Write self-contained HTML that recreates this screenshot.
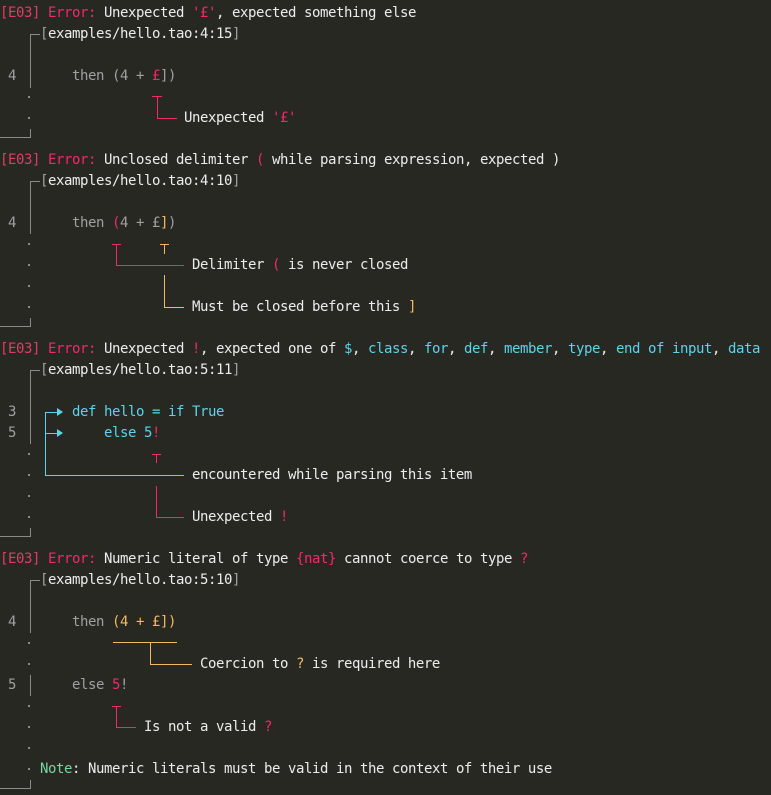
<!DOCTYPE html>
<html><head><meta charset="utf-8">
<style>
html,body{margin:0;padding:0;background:#282823;width:771px;height:795px;overflow:hidden}
body{position:relative;font-family:"DejaVu Sans Mono","Liberation Mono",monospace;font-size:14px;letter-spacing:-0.43px;color:#ececec}
.r{position:absolute;left:0;height:21px;line-height:21px;white-space:pre}
.g{color:#a0a0a0}.p{color:#f2286a}.y{color:#f4b860}.c{color:#5cd3ec}.n{color:#74d6a0}.e{color:#e03c68}
.l{position:absolute;background:#8a8a8a}
.lp{position:absolute;background:#f2286a}
.ly{position:absolute;background:#f4b860}
.lc{position:absolute;background:#5cd3ec}
.d{position:absolute;width:2px;height:2px;background:#8a8a8a;left:28px}
.tri{position:absolute;width:0;height:0;border-left:6px solid #5cd3ec;border-top:4px solid transparent;border-bottom:4px solid transparent;left:57px}
</style></head><body>

<div class="r" style="top:3px"><span class="e">[E03]</span> <span class="p">Error:</span> Unexpected <span class="p">'£'</span>, expected something else</div>
<div class="r" style="top:24px">     <span class="g">[</span>examples/hello.tao:4:15<span class="g">]</span></div>
<div class="r g" style="top:66px"> 4       then (4 + <span class="p">£</span>])</div>
<div class="r" style="top:108px">                       Unexpected <span class="p">'£'</span></div>

<div class="r" style="top:150px"><span class="e">[E03]</span> <span class="p">Error:</span> Unclosed delimiter <span class="p">(</span> while parsing expression, expected )</div>
<div class="r" style="top:171px">     <span class="g">[</span>examples/hello.tao:4:10<span class="g">]</span></div>
<div class="r g" style="top:213px"> 4       then <span class="p">(</span>4 + £<span class="y">]</span>)</div>
<div class="r" style="top:255px">                        Delimiter <span class="p">(</span> is never closed</div>
<div class="r" style="top:297px">                        Must be closed before this <span class="y">]</span></div>

<div class="r" style="top:339px"><span class="e">[E03]</span> <span class="p">Error:</span> Unexpected <span class="p">!</span>, expected one of <span class="c">$</span>, <span class="c">class</span>, <span class="c">for</span>, <span class="c">def</span>, <span class="c">member</span>, <span class="c">type</span>, <span class="c">end of input</span>, <span class="c">data</span></div>
<div class="r" style="top:360px">     <span class="g">[</span>examples/hello.tao:5:11<span class="g">]</span></div>
<div class="r" style="top:402px"><span class="g"> 3</span>       <span class="c">def hello = if True</span></div>
<div class="r" style="top:423px"><span class="g"> 5</span>           <span class="c">else 5</span><span class="p">!</span></div>
<div class="r" style="top:465px">                        encountered while parsing this item</div>
<div class="r" style="top:507px">                        Unexpected <span class="p">!</span></div>

<div class="r" style="top:549px"><span class="e">[E03]</span> <span class="p">Error:</span> Numeric literal of type <span class="p">{nat}</span> cannot coerce to type <span class="p">?</span></div>
<div class="r" style="top:570px">     <span class="g">[</span>examples/hello.tao:5:10<span class="g">]</span></div>
<div class="r g" style="top:612px"> 4       then <span class="y">(4 + £])</span></div>
<div class="r" style="top:654px">                         Coercion to <span class="y">?</span> is required here</div>
<div class="r g" style="top:675px"> 5       else <span class="p">5</span>!</div>
<div class="r" style="top:717px">                  Is not a valid <span class="p">?</span></div>
<div class="r" style="top:759px">     <span class="n">Note</span>: Numeric literals must be valid in the context of their use</div>

<div class="l" style="left:30px;top:34px;width:10px;height:1px"></div>
<div class="l" style="left:30px;top:34px;width:1px;height:54px"></div>
<div class="d" style="top:96px"></div><div class="d" style="top:117px"></div>
<div class="l" style="left:0;top:137px;width:31px;height:1px"></div>
<div class="l" style="left:30px;top:129px;width:1px;height:9px"></div>
<div class="lp" style="left:152px;top:96px;width:10px;height:1px"></div>
<div class="lp" style="left:157px;top:96px;width:1px;height:23px"></div>
<div class="lp" style="left:157px;top:118px;width:20px;height:1px"></div>

<div class="l" style="left:30px;top:181px;width:10px;height:1px"></div>
<div class="l" style="left:30px;top:181px;width:1px;height:53px"></div>
<div class="d" style="top:243px"></div><div class="d" style="top:264px"></div><div class="d" style="top:285px"></div><div class="d" style="top:306px"></div>
<div class="l" style="left:0;top:326px;width:31px;height:1px"></div>
<div class="l" style="left:30px;top:318px;width:1px;height:9px"></div>
<div class="lp" style="left:112px;top:244px;width:9px;height:1px"></div>
<div class="lp" style="left:116px;top:244px;width:1px;height:22px"></div>
<div class="lp" style="left:116px;top:265px;width:68px;height:1px"></div>
<div class="ly" style="left:160px;top:244px;width:9px;height:1px"></div>
<div class="ly" style="left:164px;top:244px;width:1px;height:10px"></div>
<div class="ly" style="left:164px;top:275px;width:1px;height:33px"></div>
<div class="ly" style="left:164px;top:307px;width:20px;height:1px"></div>

<div class="l" style="left:30px;top:370px;width:10px;height:1px"></div>
<div class="l" style="left:30px;top:370px;width:1px;height:74px"></div>
<div class="d" style="top:453px"></div><div class="d" style="top:474px"></div><div class="d" style="top:495px"></div><div class="d" style="top:516px"></div>
<div class="l" style="left:0;top:536px;width:31px;height:1px"></div>
<div class="l" style="left:30px;top:528px;width:1px;height:9px"></div>
<div class="lc" style="left:45px;top:412px;width:1px;height:64px"></div>
<div class="lc" style="left:45px;top:475px;width:139px;height:1px"></div>
<div class="lc" style="left:45px;top:412px;width:13px;height:1px"></div>
<div class="lc" style="left:45px;top:433px;width:13px;height:1px"></div>
<div class="tri" style="top:408px"></div>
<div class="tri" style="top:429px"></div>
<div class="lp" style="left:152px;top:454px;width:9px;height:1px"></div>
<div class="lp" style="left:156px;top:454px;width:1px;height:9px"></div>
<div class="lp" style="left:156px;top:486px;width:1px;height:32px"></div>
<div class="lp" style="left:156px;top:517px;width:28px;height:1px"></div>

<div class="l" style="left:30px;top:580px;width:10px;height:1px"></div>
<div class="l" style="left:30px;top:580px;width:1px;height:53px"></div>
<div class="d" style="top:642px"></div><div class="d" style="top:663px"></div>
<div class="l" style="left:30px;top:675px;width:1px;height:21px"></div>
<div class="d" style="top:705px"></div><div class="d" style="top:726px"></div><div class="d" style="top:747px"></div><div class="d" style="top:768px"></div>
<div class="l" style="left:0;top:788px;width:31px;height:1px"></div>
<div class="l" style="left:30px;top:780px;width:1px;height:9px"></div>
<div class="ly" style="left:113px;top:642px;width:64px;height:1px"></div>
<div class="ly" style="left:150px;top:642px;width:1px;height:23px"></div>
<div class="ly" style="left:150px;top:664px;width:42px;height:1px"></div>
<div class="lp" style="left:112px;top:706px;width:9px;height:1px"></div>
<div class="lp" style="left:116px;top:706px;width:1px;height:22px"></div>
<div class="lp" style="left:116px;top:727px;width:20px;height:1px"></div>

</body></html>
